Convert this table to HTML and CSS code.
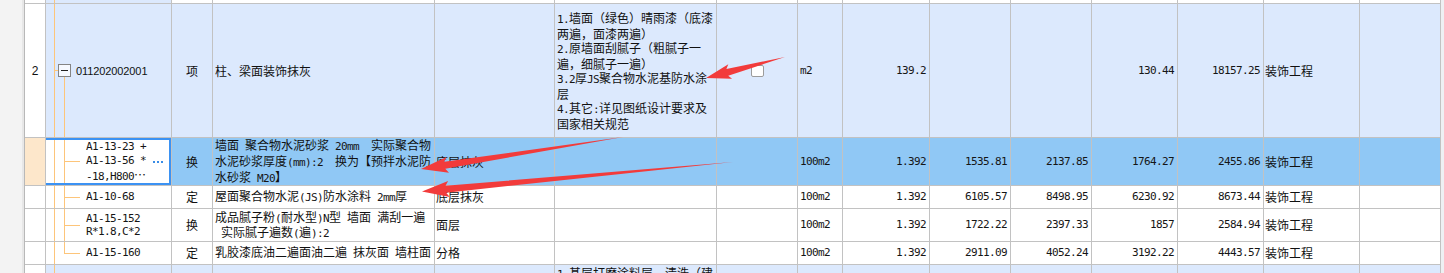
FILE: index.html
```html
<!DOCTYPE html>
<html lang="zh-CN">
<head>
<meta charset="utf-8">
<title>清单</title>
<link rel="stylesheet" href="styles.css">
</head>
<body>
<div class="page">
  <div class="gutter"></div>
  <div class="grid">
    <div class="row h-top">
      <div class="c no"></div>
      <div class="c tree t-top"></div>
      <div class="c"></div><div class="c"></div><div class="c"></div><div class="c"></div><div class="c"></div><div class="c"></div><div class="c"></div><div class="c"></div><div class="c"></div><div class="c"></div><div class="c"></div><div class="c"></div><div class="c"></div>
    </div>

    <div class="row item h-item">
      <div class="c no ctr sans">2</div>
      <div class="c tree t-parent"><span class="toggle"></span><span class="code">011202002001</span></div>
      <div class="c ctr">项</div>
      <div class="c txt">柱、梁面装饰抹灰</div>
      <div class="c"></div>
      <div class="c txt"><span class="lines"><span class="m">1.</span>墙面（绿色）晴雨漆（底漆<br>两遍，面漆两遍）<br><span class="m">2.</span>原墙面刮腻子（粗腻子一<br>遍，细腻子一遍）<br><span class="m">3.2</span>厚<span class="m">JS</span>聚合物水泥基防水涂<br>层<br><span class="m">4.</span>其它<span class="m">:</span>详见图纸设计要求及<br>国家相关规范</span></div>
      <div class="c ctr"><span class="check"></span></div>
      <div class="c txt"><span class="m">m2</span></div>
      <div class="c num"><span class="m">139.2</span></div>
      <div class="c"></div>
      <div class="c"></div>
      <div class="c num"><span class="m">130.44</span></div>
      <div class="c num"><span class="m">18157.25</span></div>
      <div class="c txt1">装饰工程</div>
      <div class="c"></div>
    </div>

    <div class="row sel h-sel">
      <div class="c no"></div>
      <div class="c tree t-child cur"><span class="lines m">A1-13-23 +<br>A1-13-56 *<br>-18,H800<span class="ell">…</span></span><span class="more"></span></div>
      <div class="c ctr">换</div>
      <div class="c txt"><span class="lines">墙面<span class="m"> </span>聚合物水泥砂浆<span class="m"> 20mm  </span>实际聚合物<br>水泥砂浆厚度<span class="m">(mm):2  </span>换为【预拌水泥防<br>水砂浆<span class="m"> M20</span>】</span></div>
      <div class="c txt1">底层抹灰</div>
      <div class="c"></div>
      <div class="c"></div>
      <div class="c txt"><span class="m">100m2</span></div>
      <div class="c num"><span class="m">1.392</span></div>
      <div class="c num"><span class="m">1535.81</span></div>
      <div class="c num"><span class="m">2137.85</span></div>
      <div class="c num"><span class="m">1764.27</span></div>
      <div class="c num"><span class="m">2455.86</span></div>
      <div class="c txt1">装饰工程</div>
      <div class="c"></div>
    </div>

    <div class="row sub h-68">
      <div class="c no"></div>
      <div class="c tree t-child"><span class="m">A1-10-68</span></div>
      <div class="c ctr">定</div>
      <div class="c txt"><span class="lines">屋面聚合物水泥<span class="m">(JS)</span>防水涂料<span class="m"> 2mm</span>厚</span></div>
      <div class="c txt1">底层抹灰</div>
      <div class="c"></div>
      <div class="c"></div>
      <div class="c txt"><span class="m">100m2</span></div>
      <div class="c num"><span class="m">1.392</span></div>
      <div class="c num"><span class="m">6105.57</span></div>
      <div class="c num"><span class="m">8498.95</span></div>
      <div class="c num"><span class="m">6230.92</span></div>
      <div class="c num"><span class="m">8673.44</span></div>
      <div class="c txt1">装饰工程</div>
      <div class="c"></div>
    </div>

    <div class="row sub h-152">
      <div class="c no"></div>
      <div class="c tree t-child"><span class="lines tight m">A1-15-152<br>R*1.8,C*2</span></div>
      <div class="c ctr">换</div>
      <div class="c txt"><span class="lines tight">成品腻子粉<span class="m">(</span>耐水型<span class="m">)N</span>型<span class="m"> </span>墙面<span class="m"> </span>满刮一遍<br><span class="m"> </span>实际腻子遍数<span class="m">(</span>遍<span class="m">):2</span></span></div>
      <div class="c txt1">面层</div>
      <div class="c"></div>
      <div class="c"></div>
      <div class="c txt"><span class="m">100m2</span></div>
      <div class="c num"><span class="m">1.392</span></div>
      <div class="c num"><span class="m">1722.22</span></div>
      <div class="c num"><span class="m">2397.33</span></div>
      <div class="c num"><span class="m">1857</span></div>
      <div class="c num"><span class="m">2584.94</span></div>
      <div class="c txt1">装饰工程</div>
      <div class="c"></div>
    </div>

    <div class="row sub h-160">
      <div class="c no"></div>
      <div class="c tree t-last"><span class="m">A1-15-160</span></div>
      <div class="c ctr">定</div>
      <div class="c txt"><span class="lines">乳胶漆底油二遍面油二遍<span class="m"> </span>抹灰面<span class="m"> </span>墙柱面</span></div>
      <div class="c txt1">分格</div>
      <div class="c"></div>
      <div class="c"></div>
      <div class="c txt"><span class="m">100m2</span></div>
      <div class="c num"><span class="m">1.392</span></div>
      <div class="c num"><span class="m">2911.09</span></div>
      <div class="c num"><span class="m">4052.24</span></div>
      <div class="c num"><span class="m">3192.22</span></div>
      <div class="c num"><span class="m">4443.57</span></div>
      <div class="c txt1">装饰工程</div>
      <div class="c"></div>
    </div>

    <div class="row item h-last">
      <div class="c no"></div>
      <div class="c tree t-top"></div>
      <div class="c"></div>
      <div class="c"></div>
      <div class="c"></div>
      <div class="c txt top"><span class="lines"><span class="m">1.</span>基层打磨涂料层，清洗（建</span></div>
      <div class="c"></div><div class="c"></div><div class="c"></div><div class="c"></div><div class="c"></div><div class="c"></div><div class="c"></div><div class="c"></div><div class="c"></div>
    </div>
  </div>
  <div class="edge"></div>

  <svg class="marks" width="1444" height="273" viewBox="0 0 1444 273">
    <polygon points="785,57 726.4,68.9 728.3,64.3 706,78 732.1,78.8 728.2,75.7"/>
    <polygon points="623,137 444.2,161.8 446.4,156.9 421,169 449.0,172.7 445.3,168.8"/>
    <polygon points="733,162 445.6,185.7 448.1,180.9 422,191.5 449.7,196.9 446.2,192.7"/>
  </svg>
</div>
</body>
</html>
```
FILE: styles.css
```css
* {
  box-sizing: border-box;
  margin: 0;
  padding: 0;
}

html,
body {
  width: 1444px;
  height: 273px;
  overflow: hidden;
  background: #ffffff;
}

body {
  font-family: "Noto Sans CJK SC", "Noto Sans", sans-serif;
  font-size: 12px;
  line-height: 14px;
  color: #111111;
}

.page {
  position: relative;
  display: flex;
  width: 1444px;
  height: 273px;
}

.gutter {
  flex: none;
  width: 24px;
  background: linear-gradient(90deg, #f3f3f3 22px, #e7e7e7 22px);
}

.grid {
  flex: none;
  width: 1417px;
  border-left: 1px solid #b8b8b8;
  display: flex;
  flex-direction: column;
}

.edge {
  flex: 1;
  background: #eef0f3;
}

.row {
  flex: none;
  display: grid;
  grid-template-columns: 21px 126px 41px 222px 120px 162px 81px 45px 87px 81px 81px 86px 86px 96px 81px;
  background: #ffffff;
}

.h-top { height: 4px; }
.h-item { height: 134px; }
.h-sel { height: 48px; }
.h-68 { height: 23px; }
.h-152 { height: 33px; }
.h-160 { height: 23px; }
.h-last { flex: 1; }

.item { background: #dce9fd; }
.sel { background: #90c8f5; }
.sub { background: #ffffff; }

.c {
  display: flex;
  align-items: center;
  min-width: 0;
  overflow: hidden;
  white-space: nowrap;
  border-right: 1px solid #c2c2c2;
  border-bottom: 1px solid #c2c2c2;
}

.no { background: #ffffff; }
.sel .no { background: #fde7cb; }

.ctr { justify-content: center; }
.num { justify-content: flex-end; padding-right: 3px; }
.txt { padding-left: 2px; }
.txt1 { padding-left: 1px; }
.top { align-items: flex-start; padding-top: 1px; }

.sans {
  font-family: "Liberation Sans", sans-serif;
  font-size: 12px;
}

.m {
  font-family: "DejaVu Sans Mono", "Liberation Mono", monospace;
  font-size: 11px;
  letter-spacing: -0.62px;
  white-space: pre;
  color: #151515;
}

.lines {
  display: block;
  line-height: 14px;
  white-space: nowrap;
}

.lines.m { white-space: pre; }

.tight { line-height: 13px; }

.ell {
  font-family: "Noto Sans CJK SC", sans-serif;
  font-size: 12px;
  letter-spacing: 0;
}

/* tree column */
.tree {
  position: relative;
  padding-left: 40px;
  background-repeat: no-repeat;
}

.t-top {
  background-color: #dce9fd;
  background-image: linear-gradient(#fdc57a, #fdc57a);
  background-size: 1px 100%;
  background-position: 8px 0;
}

.t-parent {
  padding-left: 12px;
  background-image:
    linear-gradient(#fdc57a, #fdc57a),
    linear-gradient(#fdc57a, #fdc57a),
    linear-gradient(#fdc57a, #fdc57a);
  background-size: 1px 100%, 4px 1px, 1px 61px;
  background-position: 8px 0, 8px 50%, 18px 100%;
}

.t-child,
.t-last {
  background-color: #ffffff;
  background-image:
    linear-gradient(#fdc57a, #fdc57a),
    linear-gradient(#fdc57a, #fdc57a),
    linear-gradient(#fdc57a, #fdc57a);
  background-size: 1px 100%, 1px 100%, 16px 1px;
  background-position: 8px 0, 18px 0, 18px 50%;
}

.t-last {
  background-size: 1px 100%, 1px 50%, 16px 1px;
}

.toggle {
  flex: none;
  position: relative;
  width: 13px;
  height: 13px;
  margin-right: 5px;
  border: 1px solid #848484;
  background: #f6f9ff;
}

.toggle::after {
  content: "";
  position: absolute;
  left: 2px;
  top: 5px;
  width: 7px;
  height: 1px;
  background: #222222;
}

.code {
  font-family: "Liberation Sans", sans-serif;
  font-size: 11px;
  letter-spacing: -0.1px;
}

.cur::after {
  content: "";
  position: absolute;
  top: 0;
  right: 0;
  bottom: 0;
  left: -2px;
  border: 2px solid #3b92f3;
}

.more {
  flex: none;
  width: 10px;
  height: 2px;
  margin-left: 7px;
  background: linear-gradient(90deg, #3a8de6 2px, transparent 2px) 0 0 / 4px 2px repeat-x;
}

.check {
  display: block;
  width: 13px;
  height: 12px;
  margin-top: 1px;
  border: 1px solid #9c9c9c;
  border-radius: 2px;
  background: #ffffff;
}

.marks {
  position: absolute;
  top: 0;
  left: 0;
  pointer-events: none;
}

.marks polygon {
  fill: #f23b3b;
}
```
